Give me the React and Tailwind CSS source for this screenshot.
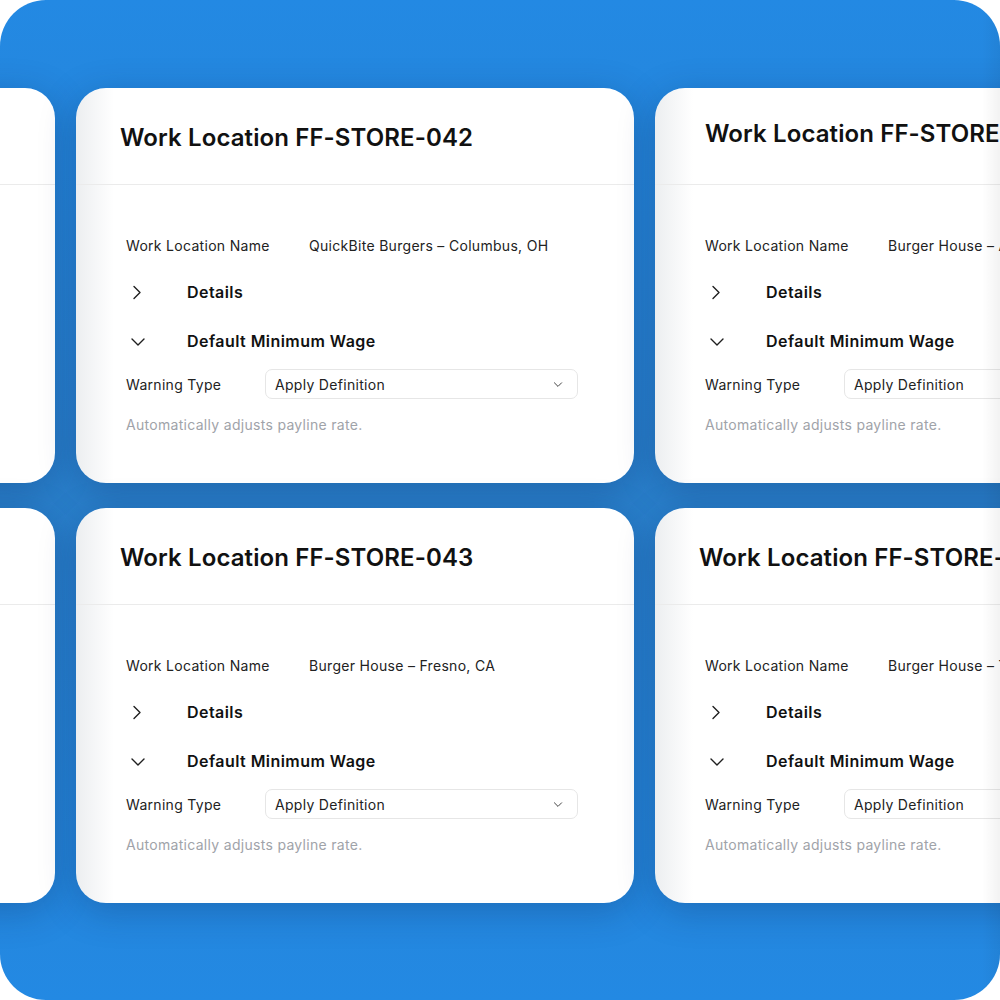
import React from 'react';

const rows = [
  [
    { code: 'FF-STORE-041', name: 'QuickBite Burgers – Dayton, OH' },
    { code: 'FF-STORE-042', name: 'QuickBite Burgers – Columbus, OH' },
    { code: 'FF-STORE-044', name: 'Burger House – Austin, TX', titleClass: 'pl-[50px] pb-[4px]' },
  ],
  [
    { code: 'FF-STORE-040', name: 'Burger House – Reno, NV' },
    { code: 'FF-STORE-043', name: 'Burger House – Fresno, CA' },
    { code: 'FF-STORE-045', name: 'Burger House – Tucson, AZ', titleClass: 'pl-[44px] pt-[4px]' },
  ],
];

function ChevronRight() {
  return (
    <svg width="20" height="20" viewBox="0 0 20 20" fill="none" stroke="#1f1f1f" strokeWidth="1.4" strokeLinecap="round" strokeLinejoin="round">
      <path d="M7 4.5l6 6-6 6" />
    </svg>
  );
}

function ChevronDown({ size = 20 }) {
  return (
    <svg width={size} height={size} viewBox="0 0 20 20" fill="none" stroke="#1f1f1f" strokeWidth="1.4" strokeLinecap="round" strokeLinejoin="round">
      <path d="M4 8l6 6 6-6" />
    </svg>
  );
}

function LocationCard({ code, name, titleClass = 'pl-[44px] pt-[4px]' }) {
  return (
    <div className="w-[558px] h-[395px] shrink-0 rounded-[30px] overflow-hidden bg-[linear-gradient(to_right,#eceef0,#ffffff_38px)] shadow-[0_8px_36px_rgba(10,40,90,0.28)]">
      {/* header */}
      <div className={`h-[97px] flex items-center border-b border-[#ebebeb] ${titleClass}`}>
        <h3 className="text-[24px] font-semibold text-[#111] tracking-[0.1px] whitespace-nowrap">Work Location {code}</h3>
      </div>

      {/* body */}
      <div className="pl-[50px] pr-[56px] text-[14px] tracking-[0.3px] text-[#222]">
        <div className="mt-[50px] h-[20px] flex items-center">
          <span className="w-[183px] shrink-0">Work Location Name</span>
          <span className="whitespace-nowrap">{name}</span>
        </div>

        <div className="mt-[25px] h-[24px] flex items-center">
          <span className="w-[61px] shrink-0 pl-[1px]"><ChevronRight /></span>
          <span className="text-[16px] font-semibold tracking-[0.45px] text-[#111]">Details</span>
        </div>

        <div className="mt-[25px] h-[24px] flex items-center">
          <span className="w-[61px] shrink-0 pl-[2px]"><ChevronDown /></span>
          <span className="text-[16px] font-semibold tracking-[0.45px] text-[#111]">Default Minimum Wage</span>
        </div>

        <div className="mt-[16px] h-[30px] flex items-center">
          <span className="w-[139px] shrink-0">Warning Type</span>
          <div className="w-[313px] h-[30px] shrink-0 flex items-center justify-between rounded-[7px] border border-[#e6e6e6] pl-[9px] pr-[13px] bg-white">
            <span>Apply Definition</span>
            <ChevronDown size={12} />
          </div>
        </div>

        <p className="mt-[15px] h-[20px] flex items-center text-[#9fa3a9]">Automatically adjusts payline rate.</p>
      </div>
    </div>
  );
}

export default function App() {
  return (
    <div className="w-[1000px] h-[1000px] bg-white font-['Inter',sans-serif]">
      <div className="relative w-[1000px] h-[1000px] rounded-[46px] overflow-hidden bg-[linear-gradient(to_bottom,#2389e3,#2a80cc_50%,#2389e3)]">
        <div className="pt-[88px] flex flex-col gap-[25px]">
          {rows.map((row, i) => (
            <div key={i} className="flex gap-[21px] ml-[-503px]">
              {row.map((card) => (
                <LocationCard key={card.code} {...card} />
              ))}
            </div>
          ))}
        </div>
        {/* soft fade on the right edge */}
        <div className="pointer-events-none absolute inset-y-0 right-0 w-[18px] bg-gradient-to-r from-transparent to-black/5" />
      </div>
    </div>
  );
}
